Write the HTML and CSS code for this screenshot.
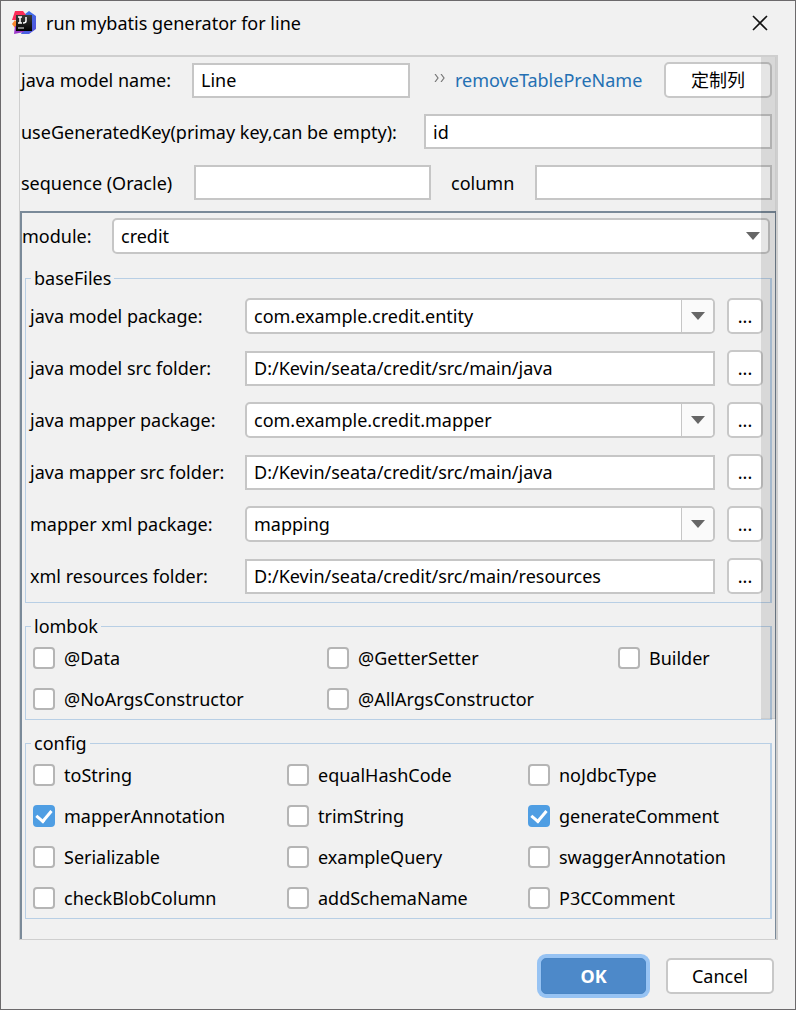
FILE: index.html
```html
<!DOCTYPE html>
<html lang="en">
<head>
<meta charset="utf-8">
<title>run mybatis generator for line</title>
<link rel="stylesheet" href="styles.css">
</head>
<body>
<form class="dialog">
  <header class="titlebar">
    <svg class="app-icon" viewBox="0 0 24 24" aria-hidden="true">
      <defs>
        <linearGradient id="blue" x1="0" y1="0" x2="1" y2="1"><stop offset="0" stop-color="#2f7df0"/><stop offset="1" stop-color="#5a4fd8"/></linearGradient>
        <linearGradient id="dark" x1="0" y1="0" x2="0" y2="1"><stop offset="0" stop-color="#3a3a3a"/><stop offset="1" stop-color="#000"/></linearGradient>
      </defs>
      <path d="M13 3 17 0l7 5v13l-7 5H9l4-9z" fill="url(#blue)"/>
      <path d="M3 0h8l3 4 -3 5H0z" fill="#fb2b58"/>
      <path d="M0 13l3-4 5 6-5 2z" fill="#f9852c"/>
      <path d="M3 15l-1 8 10-2v-5z" fill="#9a38c8"/>
      <path d="M4 4h16v16H4z" fill="url(#dark)"/>
      <path d="M6 6h4M8 6v6M6 12h4M14 6v4q0 2-3 2" fill="none" stroke="#fff" stroke-width="1.5"/>
      <path d="M6 17h6" stroke="#ccc" stroke-width="1.2"/>
    </svg>
    <h1 class="title">run mybatis generator for line</h1>
    <button class="close" type="button" aria-label="Close">
      <svg viewBox="0 0 16 16"><path d="M1 1l14 14M15 1L1 15" fill="none" stroke="#111" stroke-width="1.6"/></svg>
    </button>
  </header>

  <main class="scroll-pane">
    <div class="top-rows">
      <div class="row row-name">
        <label for="model">java model name:</label>
        <input class="field" id="model" type="text" value="Line">
        <div class="remove">
          <svg class="chevrons" viewBox="0 0 12 8" aria-hidden="true"><path d="M1 0l3 4-3 4M7 0l3 4-3 4" fill="none" stroke="#777" stroke-width="1.2"/></svg>
          <a class="link" href="#">removeTablePreName</a>
        </div>
        <button class="btn" type="button" lang="zh">定制列</button>
      </div>
      <div class="row row-key">
        <label for="key">useGeneratedKey(primay key,can be empty):</label>
        <input class="field" id="key" type="text" value="id">
      </div>
      <div class="row row-seq">
        <label for="seq">sequence (Oracle)</label>
        <input class="field" id="seq" type="text">
        <label class="column-label" for="col">column</label>
        <input class="field" id="col" type="text">
      </div>
    </div>

    <section class="panel">
      <div class="row row-module">
        <label for="module">module:</label>
        <div class="combo">
          <select class="field" id="module"><option>credit</option></select>
          <span class="arrow plain"><svg viewBox="0 0 14 8"><path d="M0 0h14L7 8z" fill="#666"/></svg></span>
        </div>
      </div>

      <fieldset class="group files">
        <legend>baseFiles</legend>
        <div class="row row-file">
          <label for="mp">java model package:</label>
          <div class="combo"><select class="field" id="mp"><option>com.example.credit.entity</option></select><span class="arrow"><svg viewBox="0 0 14 8"><path d="M0 0h14L7 8z" fill="#666"/></svg></span></div>
          <button class="btn" type="button">...</button>
        </div>
        <div class="row row-file">
          <label for="ms">java model src folder:</label>
          <input class="field" id="ms" type="text" value="D:/Kevin/seata/credit/src/main/java">
          <button class="btn" type="button">...</button>
        </div>
        <div class="row row-file">
          <label for="pp">java mapper package:</label>
          <div class="combo"><select class="field" id="pp"><option>com.example.credit.mapper</option></select><span class="arrow"><svg viewBox="0 0 14 8"><path d="M0 0h14L7 8z" fill="#666"/></svg></span></div>
          <button class="btn" type="button">...</button>
        </div>
        <div class="row row-file">
          <label for="ps">java mapper src folder:</label>
          <input class="field" id="ps" type="text" value="D:/Kevin/seata/credit/src/main/java">
          <button class="btn" type="button">...</button>
        </div>
        <div class="row row-file">
          <label for="xp">mapper xml package:</label>
          <div class="combo"><select class="field" id="xp"><option>mapping</option></select><span class="arrow"><svg viewBox="0 0 14 8"><path d="M0 0h14L7 8z" fill="#666"/></svg></span></div>
          <button class="btn" type="button">...</button>
        </div>
        <div class="row row-file">
          <label for="xr">xml resources folder:</label>
          <input class="field" id="xr" type="text" value="D:/Kevin/seata/credit/src/main/resources">
          <button class="btn" type="button">...</button>
        </div>
      </fieldset>

      <fieldset class="group">
        <legend>lombok</legend>
        <div class="checks lombok">
          <label class="check"><input type="checkbox">@Data</label>
          <label class="check"><input type="checkbox">@GetterSetter</label>
          <label class="check"><input type="checkbox">Builder</label>
          <label class="check"><input type="checkbox">@NoArgsConstructor</label>
          <label class="check"><input type="checkbox">@AllArgsConstructor</label>
        </div>
      </fieldset>

      <fieldset class="group">
        <legend>config</legend>
        <div class="checks config">
          <label class="check"><input type="checkbox">toString</label>
          <label class="check"><input type="checkbox">equalHashCode</label>
          <label class="check"><input type="checkbox">noJdbcType</label>
          <label class="check"><input type="checkbox" checked>mapperAnnotation</label>
          <label class="check"><input type="checkbox">trimString</label>
          <label class="check"><input type="checkbox" checked>generateComment</label>
          <label class="check"><input type="checkbox">Serializable</label>
          <label class="check"><input type="checkbox">exampleQuery</label>
          <label class="check"><input type="checkbox">swaggerAnnotation</label>
          <label class="check"><input type="checkbox">checkBlobColumn</label>
          <label class="check"><input type="checkbox">addSchemaName</label>
          <label class="check"><input type="checkbox">P3CComment</label>
        </div>
      </fieldset>
    </section>
    <div class="thumb" aria-hidden="true"></div>
  </main>

  <footer class="actions">
    <button class="btn primary" type="submit">OK</button>
    <button class="btn" type="button">Cancel</button>
  </footer>
</form>
</body>
</html>
```
FILE: styles.css
```css
* { box-sizing: border-box; }

body {
  margin: 0;
  background: #f1f1f1;
  color: #000;
  font: 18px/24px "Noto Sans", "Noto Sans CJK SC", sans-serif;
}

input, select, button { font: inherit; color: inherit; }

.dialog {
  display: flex;
  flex-direction: column;
  min-height: 100vh;
  padding: 0 17px 13px 18px;
  border: 1px solid #6c6a6c;
}

.titlebar {
  display: flex;
  align-items: center;
  height: 44px;
  margin: 0 0 10px -7px;
}

.app-icon { width: 24px; height: 24px; }

.title {
  flex: 1;
  margin: 0 0 0 10px;
  font-size: 18px;
  font-weight: 400;
}

.close {
  width: 36px;
  height: 36px;
  padding: 10px;
  border: 0;
  background: none;
}

.close svg { display: block; width: 16px; height: 16px; }

.scroll-pane {
  position: relative;
  flex: 1;
  display: flex;
  flex-direction: column;
  border: solid #cfcfcf;
  border-width: 2px 2px 1px 1px;
}

.top-rows {
  display: flex;
  flex-direction: column;
  gap: 16px;
  padding: 5px 4px 11px 1px;
}

.row { display: grid; align-items: center; }
.row label { white-space: nowrap; }
.row-name { grid-template-columns: 171px 1fr 254px 108px; }
.row-key { grid-template-columns: 403px 1fr; }
.row-seq { grid-template-columns: 173px 1fr 104px 1fr; }
.row-module { grid-template-columns: 90px 1fr; padding: 5px 5px 1px 0; }
.column-label { padding-left: 20px; }

.field {
  width: 100%;
  min-width: 0;
  height: 35px;
  padding: 0 7px;
  border: 2px solid #c6c6c6;
  border-radius: 0;
  background: #fff;
  outline: 0;
}

.remove { display: flex; align-items: center; gap: 9px; padding-left: 24px; }
.chevrons { width: 12px; height: 8px; margin-bottom: 4px; }
.link { color: #2470b3; text-decoration: none; }

.btn {
  height: 36px;
  padding: 0;
  border: 2px solid #c8c8c8;
  border-radius: 5px;
  background: #fff;
}

.combo { position: relative; }
.combo .field {
  display: block;
  height: 36px;
  border-radius: 5px;
  appearance: none;
}

.arrow {
  position: absolute;
  top: 2px;
  right: 2px;
  bottom: 2px;
  display: flex;
  align-items: center;
  justify-content: center;
  width: 32px;
  border-left: 1px solid #c6c6c6;
  border-radius: 0 3px 3px 0;
  background: #fafafa;
  pointer-events: none;
}

.arrow.plain { width: 30px; border-left: 0; background: none; }
.arrow svg { width: 14px; height: 8px; }

.panel {
  flex: 1;
  border: solid #7a8a99;
  border-width: 2px 1px 0 2px;
}

.group {
  min-width: 0;
  margin: 11px 3px 0;
  padding: 0 7px 8px 4px;
  border: 1px solid #b8cfe5;
  border-right-width: 2px;
}

.group legend { margin-left: 1px; padding: 0 3px; }

.files { padding-top: 8px; }
.row-file { grid-template-columns: 215px 1fr 48px; }
.row-file .btn { margin-left: 12px; }
.row-file + .row-file { margin-top: 16px; }

.checks { display: grid; gap: 17px 0; padding: 8px 0 0 3px; }
.lombok { grid-template-columns: 294fr 291fr 145fr; }
.config { grid-template-columns: 254fr 241fr 235fr; }

.check { display: flex; align-items: center; gap: 9px; white-space: nowrap; }

.check input {
  flex: none;
  width: 22px;
  height: 22px;
  margin: 0;
  border: 2px solid #b5b5b5;
  border-radius: 4px;
  background: #fff;
  appearance: none;
}

.check input:checked {
  display: grid;
  place-items: center;
  border-color: #4f9ee3;
  background: #4f9ee3;
}

.check input:checked::before {
  content: "";
  width: 7px;
  height: 12px;
  margin-bottom: 3px;
  border: solid #fff;
  border-width: 0 3px 3px 0;
  transform: rotate(40deg);
}

.thumb {
  position: absolute;
  top: 0;
  right: 0;
  width: 15px;
  height: 75%;
  border: solid rgba(0, 0, 0, 0.06);
  border-width: 0 1px 1px 0;
  background: rgba(0, 0, 0, 0.1);
  pointer-events: none;
}

.actions {
  display: flex;
  justify-content: flex-end;
  gap: 20px;
  padding: 18px 4px 2px;
}

.actions .btn { width: 108px; }

.actions .primary {
  width: 105px;
  border: 1px solid #4a86c5;
  background: #4d89c9;
  box-shadow: 0 0 0 4px #97c3f3;
  color: #fff;
  font-weight: 700;
}
```
